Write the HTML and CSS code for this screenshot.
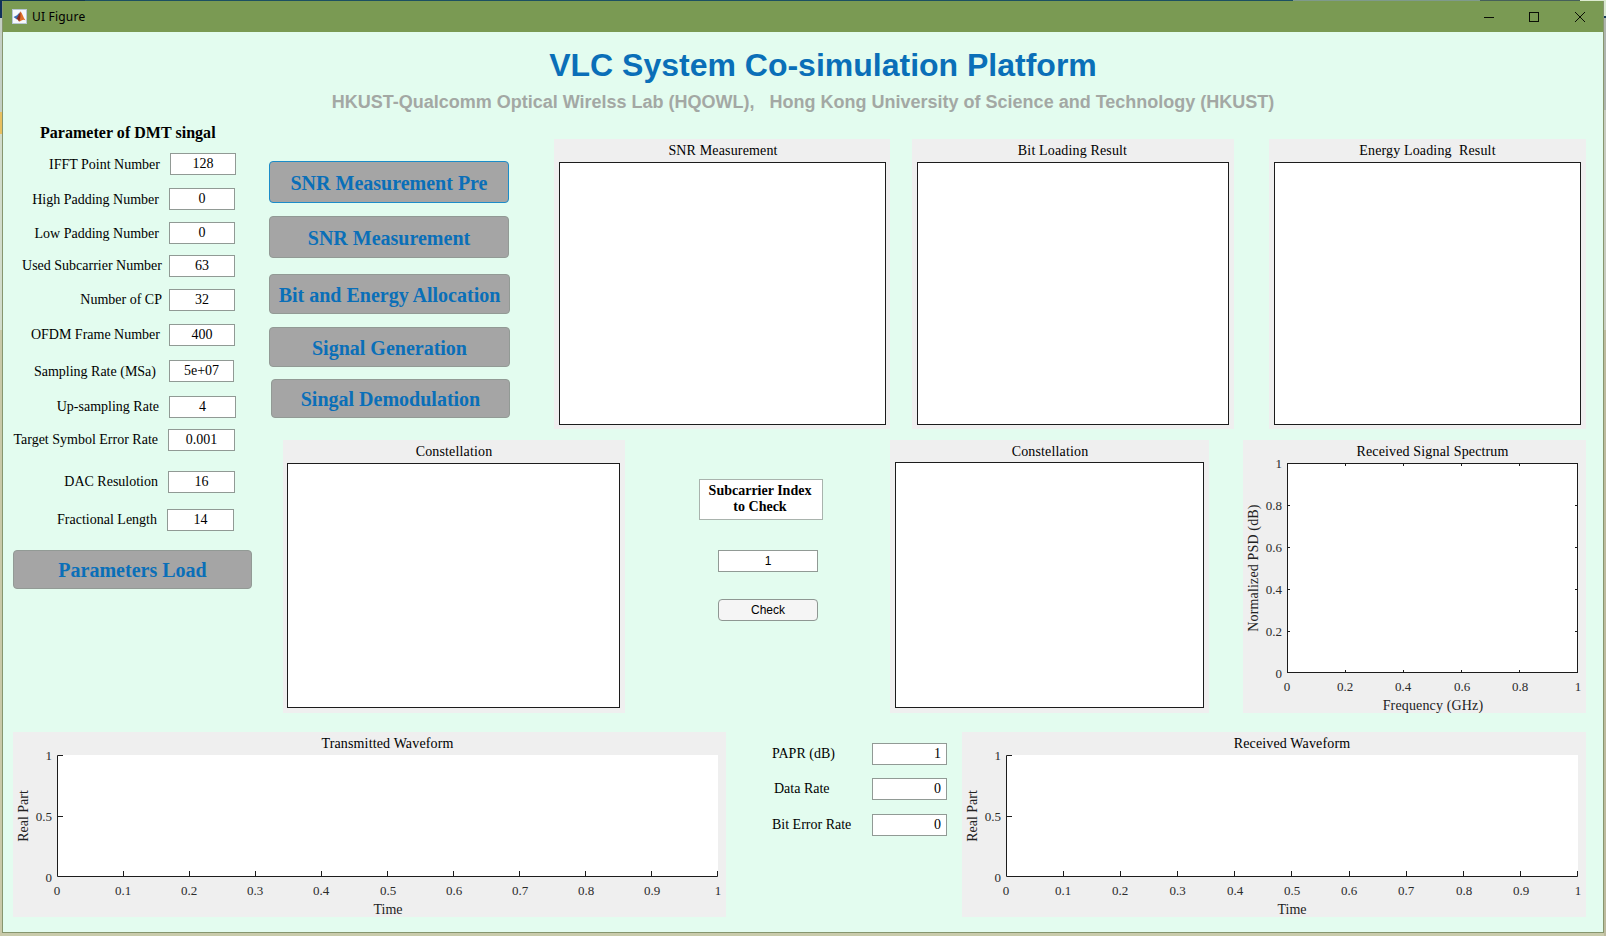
FILE: index.html
```
<!DOCTYPE html>
<html lang="en">
<head>
<meta charset="utf-8">
<title>UI Figure</title>
<link rel="stylesheet" href="styles.css">
</head>
<body>
<div class="window">
  <header class="titlebar">
    <svg class="logo" width="15" height="15" viewBox="0 0 15 15">
      <rect x=".5" y=".5" width="14" height="14" fill="#f6f8fc" stroke="#b9c7d6"/>
      <path d="M1.5 8 L5 6.2 L7.5 3.5 L6.3 9 L4.5 10.2 Z" fill="#3d6cb4"/>
      <path d="M4.5 10.2 L6.2 6.8 L8.3 2.5 L9.6 5.5 L9 11 L7 12.5 L5.6 10.4 Z" fill="#8e2a1c"/>
      <path d="M8.3 2.5 C10 3.5 11 8 13.5 11.3 C12 10.4 11 10.6 10 11.2 L7.2 12.8 C8.8 9 8.4 6 8.3 2.5 Z" fill="#e0702a"/>
    </svg>
    <span class="caption">UI Figure</span>
    <svg class="controls" width="102" height="12" viewBox="0 0 102 12" fill="none" stroke="#0b0f06">
      <path d="M0 6.5H10"/>
      <rect x="45.5" y="1.5" width="9" height="9"/>
      <path d="M91 1L101 11M101 1L91 11"/>
    </svg>
  </header>

  <main class="content">
    <div class="heading">
      <h1>VLC System Co-simulation Platform</h1>
      <p>HKUST-Qualcomm Optical Wirelss Lab (HQOWL),   Hong Kong University of Science and Technology (HKUST)</p>
    </div>

    <div class="workspace">
      <section class="params">
        <h2>Parameter of DMT singal</h2>
        <div class="field f1"><label>IFFT Point Number</label><span class="box">128</span></div>
        <div class="field f2"><label>High Padding Number</label><span class="box">0</span></div>
        <div class="field f3"><label>Low Padding Number</label><span class="box">0</span></div>
        <div class="field f4"><label>Used Subcarrier Number</label><span class="box">63</span></div>
        <div class="field f5"><label>Number of CP</label><span class="box">32</span></div>
        <div class="field f6"><label>OFDM Frame Number</label><span class="box">400</span></div>
        <div class="field f7"><label>Sampling Rate (MSa)</label><span class="box">5e+07</span></div>
        <div class="field f8"><label>Up-sampling Rate</label><span class="box">4</span></div>
        <div class="field f9"><label>Target Symbol Error Rate</label><span class="box">0.001</span></div>
        <div class="field f10"><label>DAC Resulotion</label><span class="box">16</span></div>
        <div class="field f11"><label>Fractional Length</label><span class="box">14</span></div>
        <button class="action load">Parameters Load</button>
      </section>

      <div class="stage">
        <div class="row-top">
          <div class="actions">
            <button class="action a1">SNR Measurement Pre</button>
            <button class="action a2">SNR Measurement</button>
            <button class="action a3">Bit and Energy Allocation</button>
            <button class="action a4">Signal Generation</button>
            <button class="action a5">Singal Demodulation</button>
          </div>
          <svg class="plot snr" width="336" height="290">
            <text class="t" x="169" y="15.5">SNR Measurement</text>
            <rect class="axes" x="5.5" y="23.5" width="326" height="262"/>
          </svg>
          <svg class="plot bit" width="322" height="290">
            <text class="t" x="160.5" y="15.5">Bit Loading Result</text>
            <rect class="axes" x="5.5" y="23.5" width="311" height="262"/>
          </svg>
          <svg class="plot energy" width="317" height="290">
            <text class="t" x="158.5" y="15.5">Energy Loading  Result</text>
            <rect class="axes" x="5.5" y="23.5" width="306" height="262"/>
          </svg>
        </div>

        <div class="row-mid">
          <svg class="plot" width="342" height="273">
            <text class="t" x="171" y="15.5">Constellation</text>
            <rect class="axes" x="4.5" y="23.5" width="332" height="244"/>
          </svg>
          <div class="picker">
            <div class="note">Subcarrier Index<br>to Check</div>
            <div class="box index">1</div>
            <button class="check">Check</button>
          </div>
          <svg class="plot" width="319" height="273">
            <text class="t" x="160" y="15.5">Constellation</text>
            <rect class="axes" x="5.5" y="22.5" width="308" height="245"/>
          </svg>
          <svg class="plot spectrum" width="343" height="273">
            <text class="t" x="189.5" y="15.5">Received Signal Spectrum</text>
            <rect class="axes" x="44.5" y="23.5" width="290" height="209"/>
            <path class="ticks" d="M102.5 232v-2M160.5 232v-2M218.5 232v-2M276.5 232v-2M102.5 24v2M160.5 24v2M218.5 24v2M276.5 24v2M45 65.5h2M45 107.5h2M45 149.5h2M45 191.5h2M334 65.5h-2M334 107.5h-2M334 149.5h-2M334 191.5h-2"/>
            <g class="ty"><text x="39" y="28">1</text><text x="39" y="70">0.8</text><text x="39" y="112">0.6</text><text x="39" y="154">0.4</text><text x="39" y="196">0.2</text><text x="39" y="238">0</text></g>
            <g class="tx"><text x="44" y="251">0</text><text x="102" y="251">0.2</text><text x="160" y="251">0.4</text><text x="219" y="251">0.6</text><text x="277" y="251">0.8</text><text x="335" y="251">1</text></g>
            <text class="lab wide" x="190" y="270">Frequency (GHz)</text>
            <text class="lab wide" transform="translate(15 128) rotate(-90)">Normalized PSD (dB)</text>
          </svg>
        </div>
      </div>
    </div>

    <div class="row-bottom">
      <svg class="plot" width="713" height="185">
        <text class="t" x="374.5" y="16">Transmitted Waveform</text>
        <rect class="area" x="44" y="23" width="661" height="122"/>
        <path class="ticks" d="M50 23.5H44.5V144.5H704.5V139M45 84.5h5M110.5 144v-5M176.5 144v-5M242.5 144v-5M308.5 144v-5M374.5 144v-5M440.5 144v-5M506.5 144v-5M572.5 144v-5M638.5 144v-5"/>
        <g class="ty"><text x="39" y="28">1</text><text x="39" y="89">0.5</text><text x="39" y="150">0</text></g>
        <g class="tx"><text x="44" y="163">0</text><text x="110" y="163">0.1</text><text x="176" y="163">0.2</text><text x="242" y="163">0.3</text><text x="308" y="163">0.4</text><text x="375" y="163">0.5</text><text x="441" y="163">0.6</text><text x="507" y="163">0.7</text><text x="573" y="163">0.8</text><text x="639" y="163">0.9</text><text x="705" y="163">1</text></g>
        <text class="lab" x="375" y="182">Time</text>
        <text class="lab" transform="translate(15 84) rotate(-90)">Real Part</text>
      </svg>
      <div class="readouts">
        <div class="readout r1"><label>PAPR (dB)</label><span class="box">1</span></div>
        <div class="readout r2"><label>Data Rate</label><span class="box">0</span></div>
        <div class="readout r3"><label>Bit Error Rate</label><span class="box">0</span></div>
      </div>
      <svg class="plot" width="624" height="185">
        <text class="t" x="330" y="16">Received Waveform</text>
        <rect class="area" x="44" y="23" width="572" height="122"/>
        <path class="ticks" d="M50 23.5H44.5V144.5H615.5V139M45 84.5h5M101.5 144v-5M158.5 144v-5M215.5 144v-5M272.5 144v-5M329.5 144v-5M387.5 144v-5M444.5 144v-5M501.5 144v-5M558.5 144v-5"/>
        <g class="ty"><text x="39" y="28">1</text><text x="39" y="89">0.5</text><text x="39" y="150">0</text></g>
        <g class="tx"><text x="44" y="163">0</text><text x="101" y="163">0.1</text><text x="158" y="163">0.2</text><text x="215.5" y="163">0.3</text><text x="273" y="163">0.4</text><text x="330" y="163">0.5</text><text x="387" y="163">0.6</text><text x="444" y="163">0.7</text><text x="502" y="163">0.8</text><text x="559" y="163">0.9</text><text x="616" y="163">1</text></g>
        <text class="lab" x="330" y="182">Time</text>
        <text class="lab" transform="translate(15 84) rotate(-90)">Real Part</text>
      </svg>
    </div>
  </main>
</div>
</body>
</html>
```
FILE: styles.css
```
* { box-sizing: border-box; }
body {
  margin: 0;
  width: 1606px;
  height: 936px;
  overflow: hidden;
  padding: 1px 2px 3px;
  font-family: "Liberation Serif", "Times New Roman", serif;
  font-size: 14px;
  color: #000;
  background:
    linear-gradient(90deg, #123a4e 0 85px, #1c5062 85px 1293px, #7f9a8c 1293px 1480px, #46605a 1480px 1580px, #dcebd0 1580px) 0 0 / 100% 1px no-repeat,
    linear-gradient(#10305c 0 18px, #c4cfc4 18px 112px, #e8c060 112px 134px, #d2dccc 134px 330px, #c9c9a8 330px) 0 0 / 2px 100% no-repeat,
    linear-gradient(#d8e8d0 0 16px, #123a5c 16px 18px, #aeb5ae 18px 110px, #c8ccc0 110px 330px, #bdbb9e 330px) 100% 0 / 2px 100% no-repeat,
    #c9cbab;
}
.window {
  height: 932px;
  display: flex;
  flex-direction: column;
  border: 1px solid #87966f;
  border-top: 0;
  background: #e3fcef;
}
.titlebar {
  height: 31px;
  flex: none;
  display: flex;
  align-items: center;
  padding: 0 17px 0 9px;
  background: #7a9a53;
}
.logo { margin-right: 5px; }
.caption {
  font: 12px "Noto Sans", sans-serif;
  letter-spacing: .2px;
}
.controls { margin-left: auto; }
.content { flex: 1; }

.heading {
  height: 88px;
  padding-top: 14px;
  text-align: center;
  font-family: "Liberation Sans", Arial, sans-serif;
}
h1 {
  margin: 0 0 0 40px;
  font-size: 32px;
  line-height: 38px;
  color: #0a6fb8;
}
.heading p {
  margin: 8px 0 0;
  font-size: 18px;
  line-height: 20px;
  font-weight: bold;
  white-space: pre;
  color: #a3a8a4;
}

.workspace { display: flex; height: 593px; }
.params { width: 263px; flex: none; }
h2 {
  height: 33px;
  margin: 0;
  padding-left: 37px;
  font-size: 16px;
  line-height: 25px;
  letter-spacing: .03px;
}
.box {
  display: block;
  width: 66px;
  height: 22px;
  flex: none;
  border: 1px solid #919a95;
  background: #fff;
  text-align: center;
  line-height: 19px;
}
.field { display: flex; height: 22px; line-height: 22px; }
.field label { width: 157px; margin-right: 9px; text-align: right; white-space: nowrap; }
.f1, .f2, .f3, .f7 { line-height: 24px; }
.f1 { margin-bottom: 13px; }
.f1 .box { margin-left: 1px; }
.f2 { margin-bottom: 12px; }
.f2 label, .f3 label { width: 156px; margin-right: 10px; }
.f3, .f6 { margin-bottom: 11px; }
.f4 label, .f5 label { width: 159px; margin-right: 7px; }
.f4 { margin-bottom: 12px; }
.f5 { margin-bottom: 13px; }
.f6 { margin-bottom: 14px; }
.f7 { margin-bottom: 14px; }
.f7 label { width: 153px; margin-right: 13px; }
.f7 .box { width: 65px; }
.f8 { margin-bottom: 11px; }
.f8 label { width: 156px; margin-right: 10px; }
.f8 .box, .f9 .box, .f10 .box, .f11 .box { width: 67px; }
.f9 { margin-bottom: 20px; }
.f9 label, .f10 label { width: 155px; margin-right: 10px; }
.f10 { margin-bottom: 16px; }
.f11 { margin-bottom: 19px; }
.f11 label { width: 154px; }
.f11 .box { margin-left: 1px; }

.action {
  display: block;
  padding: 2px 0 0;
  border: 1px solid #929a95;
  border-radius: 4px;
  background: #a5a5a5;
  color: #0a6fb8;
  font: bold 20px "Liberation Serif", "Times New Roman", serif;
}
.load { width: 239px; height: 39px; margin-left: 10px; }

.stage { flex: 1; }
.row-top { display: flex; height: 309px; padding-top: 19px; }
.actions { width: 244px; padding: 22px 0 0 3px; flex: none; }
.a1, .a2 { width: 240px; height: 42px; }
.a1 { border-color: #1b8cc9; margin-bottom: 13px; }
.a2 { margin-bottom: 16px; }
.a3, .a4 { width: 241px; height: 40px; margin-bottom: 13px; }
.a4 { margin-bottom: 12px; }
.a5 { width: 239px; height: 39px; margin-left: 2px; }

.plot { display: block; flex: none; background: #efefef; }
.snr { margin-left: 44px; }
.bit { margin-left: 22px; }
.energy { margin-left: 35px; }
.plot text { font-size: 14px; fill: #000; white-space: pre; }
.plot .t { letter-spacing: .15px; }
.t, .tx text, .plot .lab { text-anchor: middle; }
.ty text { text-anchor: end; }
.plot .tx text, .plot .ty text { font-size: 13px; fill: #2b2b2b; }
.plot .lab { fill: #222; }
.plot .wide { letter-spacing: .15px; }
.axes { fill: #fff; stroke: #1c1c1c; }
.area { fill: #fff; }
.ticks { fill: none; stroke: #1c1c1c; }

.row-mid { display: flex; margin-top: 11px; padding-left: 17px; height: 273px; }
.picker { width: 265px; flex: none; padding: 39px 0 0 74px; }
.note {
  width: 124px;
  height: 41px;
  margin-bottom: 30px;
  padding: 3px 2px 0 0;
  border: 1px solid #a9b3ad;
  background: #fff;
  text-align: center;
  font-weight: bold;
  line-height: 16px;
}
.index, .check {
  width: 100px;
  height: 22px;
  margin: 0 0 27px 19px;
  font: 12px/20px "Liberation Sans", Arial, sans-serif;
}
.check {
  padding: 0;
  border: 1px solid #8f9793;
  border-radius: 4px;
  background: #f5f5f5;
  color: #000;
}
.spectrum { margin-left: 34px; }

.row-bottom { display: flex; height: 185px; margin-top: 19px; padding-left: 10px; }
.readouts { width: 236px; flex: none; padding-top: 11px; }
.readout { display: flex; height: 22px; padding-left: 46px; line-height: 21px; }
.readout label { width: 100px; }
.readout .box { width: 75px; text-align: right; padding-right: 5px; }
.r1 { margin-bottom: 13px; }
.r2 { margin-bottom: 14px; padding-left: 48px; }
.r2 label { width: 98px; }
```
